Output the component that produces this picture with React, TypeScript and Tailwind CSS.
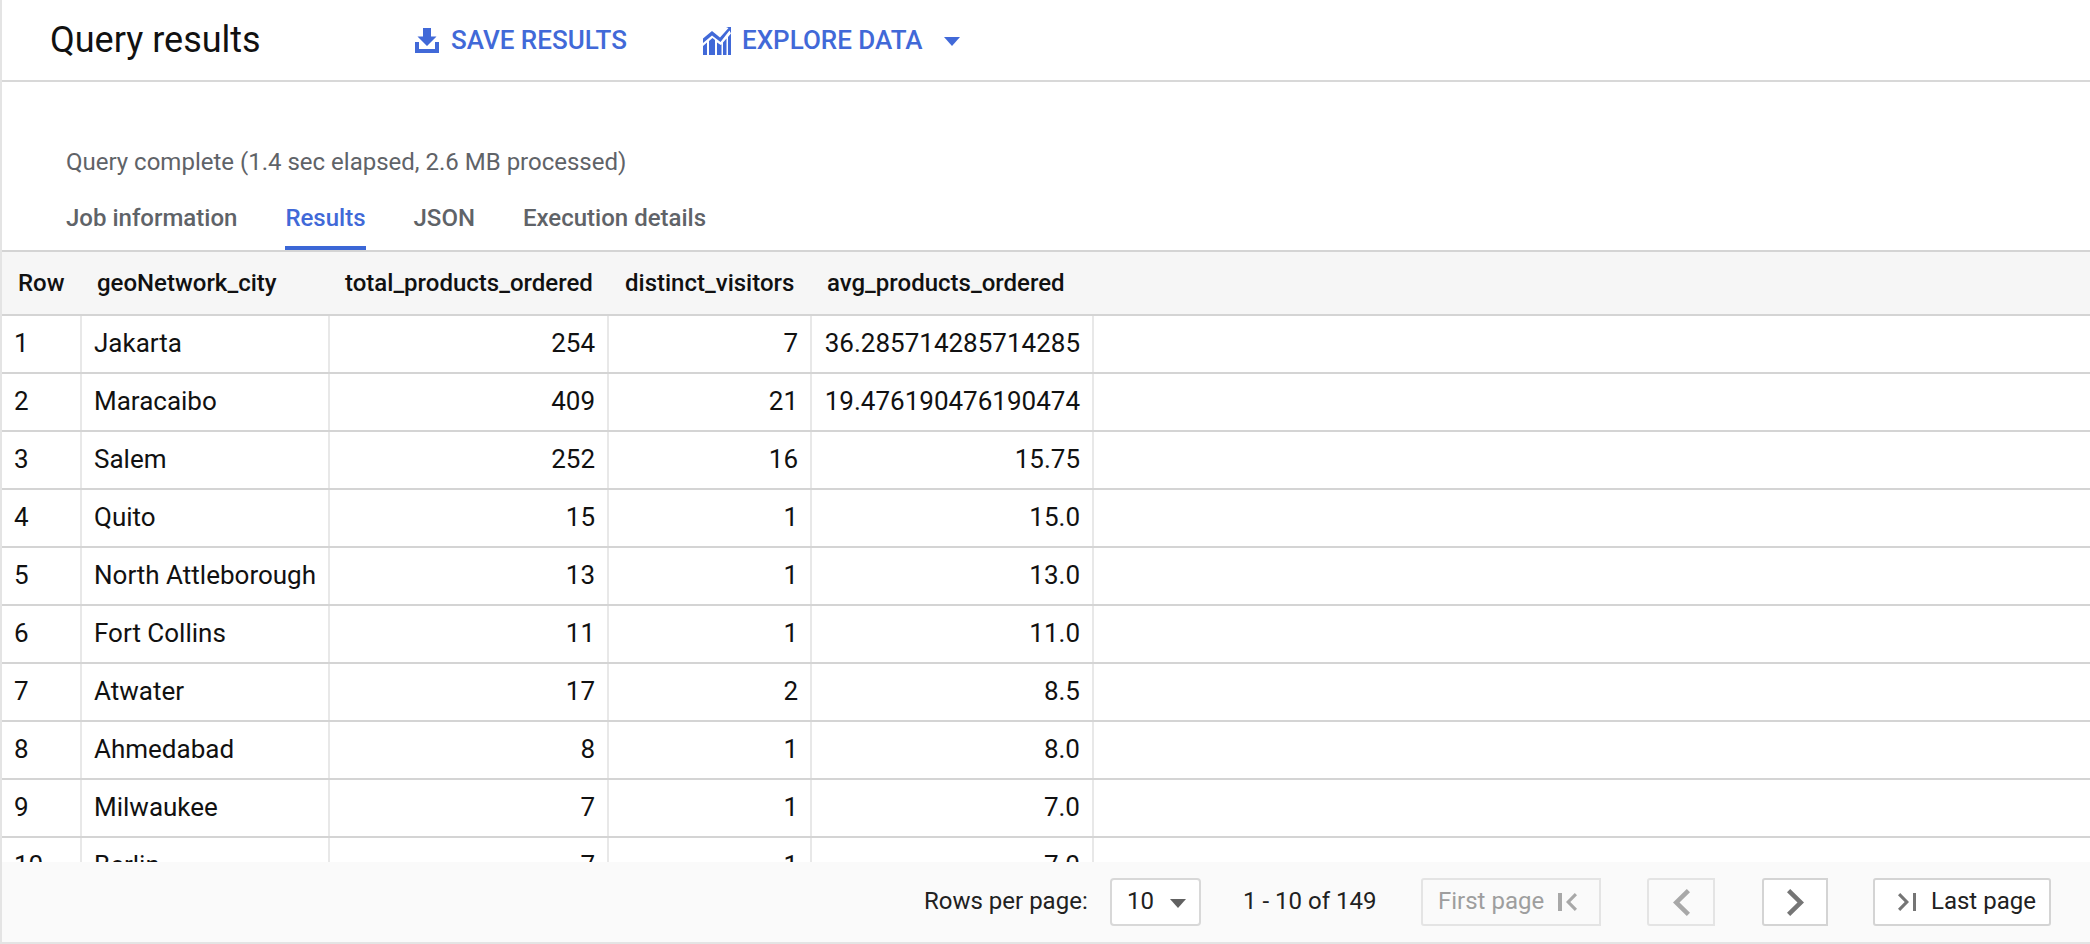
const FONT = "font-['Roboto',sans-serif]";

type RowData = [string, string, string, string, string];

const rows: RowData[] = [
  ["1", "Jakarta", "254", "7", "36.285714285714285"],
  ["2", "Maracaibo", "409", "21", "19.476190476190474"],
  ["3", "Salem", "252", "16", "15.75"],
  ["4", "Quito", "15", "1", "15.0"],
  ["5", "North Attleborough", "13", "1", "13.0"],
  ["6", "Fort Collins", "11", "1", "11.0"],
  ["7", "Atwater", "17", "2", "8.5"],
  ["8", "Ahmedabad", "8", "1", "8.0"],
  ["9", "Milwaukee", "7", "1", "7.0"],
  ["10", "Berlin", "7", "1", "7.0"],
];

function SaveIcon() {
  return (
    <svg width="24" height="25" viewBox="0 0 24 25" fill="#4169d8" className="shrink-0">
      <path d="M8 0h8v8.500h5.500L12 18 2.500 8.500H8z" />
      <path d="M0 14h4v7h16v-7h4v11H0z" />
    </svg>
  );
}

function ChartIcon() {
  return (
    <svg width="28" height="28" viewBox="0 0 28 28" fill="#4169d8" className="shrink-0">
      <path d="M0 11.500 9 4l8 6.500L25.500 1 23 0h5v6.500l-1.500-3L17.500 15 9 8.500 0 16z" />
      <path d="M0 19l4-3.500V28H0zM6 14l3.500-3 2.500 2v15H6zM14 15.500l3.800 2.500 .700-.700V28H14zM20 15.500l3.500-4V28H20zM25 10l3-3.500V28h-3z" />
    </svg>
  );
}

function Chevron({ dir, color }: { dir: "l" | "r"; color: string }) {
  return (
    <svg width="17" height="27" viewBox="0 0 17 27" fill={color}>
      <path d={dir === "l" ? "M17 3.200 13.800 0 0 13.500 13.800 27 17 23.800 6.500 13.500z" : "M0 3.200 3.200 0 17 13.500 3.200 27 0 23.800 10.500 13.500z"} />
    </svg>
  );
}

function Row({ r }: { r: RowData }) {
  return (
    <div className="flex h-[58px] shrink-0 border-b-2 border-[#d4d4d4] text-[26px] text-[#111]">
      <div className="w-[80px] shrink-0 border-r-2 border-[#e8e8e8] pl-[12px] pb-[2px] flex items-center">{r[0]}</div>
      <div className="w-[248px] shrink-0 border-r-2 border-[#e8e8e8] pl-[12px] pb-[2px] flex items-center whitespace-nowrap">{r[1]}</div>
      <div className="w-[279px] shrink-0 border-r-2 border-[#e8e8e8] pr-[12px] pb-[2px] flex items-center justify-end">{r[2]}</div>
      <div className="w-[203px] shrink-0 border-r-2 border-[#e8e8e8] pr-[12px] pb-[2px] flex items-center justify-end">{r[3]}</div>
      <div className="w-[282px] shrink-0 border-r-2 border-[#e8e8e8] pr-[12px] pb-[2px] flex items-center justify-end">{r[4]}</div>
      <div className="flex-1" />
    </div>
  );
}

const tab = "h-[64px] pt-[4px] border-b-4 flex items-center";

export default function App() {
  return (
    <div className={`${FONT} h-[944px] w-[2090px] overflow-hidden bg-white flex flex-col border-l-2 border-[#e4e4e4]`}>
      <div className="h-[82px] shrink-0 border-b-2 border-[#d8d8d8] flex items-center pl-[48px]">
        <div className="text-[36px] text-[#111] w-[365px]">Query results</div>
        <div className="flex items-center gap-[12px] text-[#4169d8] text-[26px] font-medium w-[288px] pt-[1px]">
          <SaveIcon />
          <span>SAVE RESULTS</span>
        </div>
        <div className="flex items-center gap-[11px] text-[#4169d8] text-[26px] font-medium pt-[1px]">
          <ChartIcon />
          <span>EXPLORE DATA</span>
          <svg width="16" height="9" viewBox="0 0 16 9" fill="#4169d8" className="ml-[10px] mt-[2px]"><path d="M0 0h16L8 9z" /></svg>
        </div>
      </div>
      <div className="h-[170px] shrink-0 border-b-2 border-[#d4d4d4] flex flex-col pl-[64px]">
        <div className="pt-[64px] text-[24px] leading-[32px] text-[#5f6368]">Query complete (1.4 sec elapsed, 2.6 MB processed)</div>
        <div className="mt-[8px] flex gap-[48px] text-[24px] font-medium text-[#5f6368]">
          <div className={`${tab} border-transparent`}>Job information</div>
          <div className={`${tab} text-[#4169d8] border-[#3b67d6]`}>Results</div>
          <div className={`${tab} border-transparent`}>JSON</div>
          <div className={`${tab} border-transparent`}>Execution details</div>
        </div>
      </div>
      <div className="h-[64px] shrink-0 bg-[#f6f6f6] border-b-2 border-[#d4d4d4] flex items-center text-[24px] font-medium text-[#111]">
        <div className="w-[80px] shrink-0 pl-[16px]">Row</div>
        <div className="w-[248px] shrink-0 pl-[15px]">geoNetwork_city</div>
        <div className="w-[279px] shrink-0 pl-[15px]">total_products_ordered</div>
        <div className="w-[203px] shrink-0 pl-[16px]">distinct_visitors</div>
        <div className="w-[282px] shrink-0 pl-[15px]">avg_products_ordered</div>
      </div>
      <div className="flex-1 min-h-0 overflow-hidden flex flex-col">
        {rows.map((r) => (
          <Row key={r[0]} r={r} />
        ))}
      </div>
      <div className="h-[82px] shrink-0 bg-[#fafafa] border-b-2 border-[#e4e4e4] flex items-center text-[24px] text-[#212121]">
        <div className="ml-[922px] w-[186px] pb-[2px]">Rows per page:</div>
        <div className="w-[91px] h-[48px] bg-white border-2 border-[#d8d8d8] rounded-[4px] flex items-center pl-[15px] gap-[16px]">
          <span className="pb-[2px]">10</span>
          <svg width="16" height="9" viewBox="0 0 16 9" fill="#616161" className="mt-[2px]"><path d="M0 0h16L8 9z" /></svg>
        </div>
        <div className="ml-[42px] w-[178px] pb-[2px]">1 - 10 of 149</div>
        <div className="w-[180px] h-[48px] bg-[#fafafa] border-2 border-[#e4e4e4] rounded-l-[3px] flex items-center pl-[15px] text-[#9e9e9e]">
          <span className="pb-[2px]">First page</span>
          <span className="flex items-center ml-[14px]">
            <span className="w-[4px] h-[18px] bg-[#a8a8a8] mr-[4px]" />
            <svg width="11" height="18" viewBox="0 0 11 18" fill="#a8a8a8"><path d="M11 2.200 8.800 0 0 9l8.800 9 2.200-2.200L4.300 9z" /></svg>
          </span>
        </div>
        <div className="ml-[46px] w-[68px] h-[48px] bg-[#fafafa] border-2 border-[#e4e4e4] rounded-l-[3px] flex items-center justify-center">
          <Chevron dir="l" color="#a8a8a8" />
        </div>
        <div className="ml-[47px] w-[66px] h-[48px] bg-white border-2 border-[#d4d4d4] rounded-l-[3px] flex items-center justify-center">
          <Chevron dir="r" color="#757575" />
        </div>
        <div className="ml-[45px] w-[178px] h-[48px] bg-white border-2 border-[#d4d4d4] rounded-[3px] flex items-center pl-[23px]">
          <span className="flex items-center">
            <svg width="11" height="18" viewBox="0 0 11 18" fill="#757575"><path d="M0 2.200 2.200 0 11 9l-8.800 9L0 15.800 6.700 9z" /></svg>
            <span className="w-[3px] h-[18px] bg-[#757575] ml-[4px] mr-[15px]" />
          </span>
          <span className="pb-[2px]">Last page</span>
        </div>
      </div>
    </div>
  );
}
